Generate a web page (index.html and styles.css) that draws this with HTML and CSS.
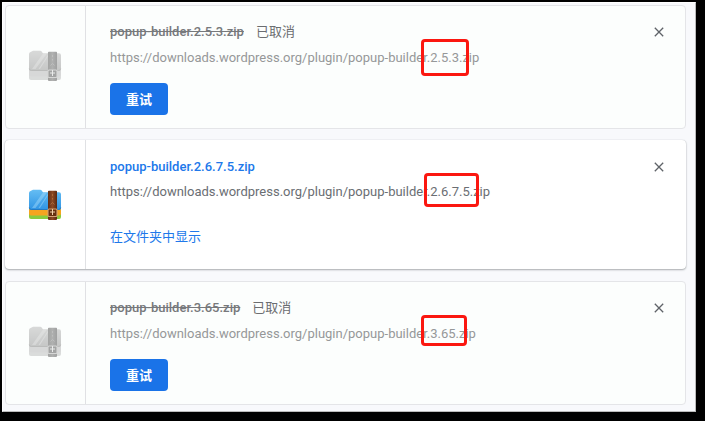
FILE: index.html
```
<!DOCTYPE html>
<html lang="zh-CN">
<head>
<meta charset="utf-8">
<title>下载内容</title>
<link rel="stylesheet" href="styles.css">
</head>
<body>
<svg class="defs" width="0" height="0" aria-hidden="true">
  <defs>
    <linearGradient id="front" x1="0" y1="0" x2="0" y2="1"><stop offset="0" stop-color="#65bdf3"/><stop offset="1" stop-color="#2f94e4"/></linearGradient>
    <linearGradient id="strap" x1="0" y1="0" x2="1" y2="0"><stop offset="0" stop-color="#602e16"/><stop offset=".5" stop-color="#8c4924"/><stop offset="1" stop-color="#592912"/></linearGradient>
    <symbol id="archive" viewBox="0 0 34 32">
      <path d="M1 21h32v7q0 2-2 2H3q-2 0-2-2z" fill="#8acb3e"/>
      <path d="M1 19h32v5.500q0 2-2 2H3q-2 0-2-2z" fill="#f5a51f"/>
      <path d="M1 4q0-1.500 1.500-2L5 .8h7q1.500 0 2 1.200l1 1.200h16q2 0 2 2V19q0 2-2 2H3q-2 0-2-2z" fill="url(#front)"/>
      <path d="M15 3.500h4L7.500 19H4zM20.500 4h1L12 19h-1.500z" fill="#a6dcfa" opacity=".45"/>
      <path d="M1.300 18.500q.3 2 2 2h27.400q1.700 0 2-2" fill="none" stroke="#2373b9" stroke-width=".8"/>
      <path d="M20 2.500q0-.8.8-.8h7.400q.8 0 .8.800v27.500q0 1-1 1h-7q-1 0-1-1z" fill="url(#strap)"/>
      <path d="M24.500 5v2m0 2v1.500m-2 5 2-2 2 2" fill="none" stroke="#b87945" stroke-width=".7"/>
      <rect x="20" y="20" width="9" height="7.500" rx="1" fill="#65300f" stroke="#d3a275" stroke-width="1.100"/>
      <path d="M24.500 20v6m-2.500-3h5" fill="none" stroke="#f2d2aa" stroke-width="1"/>
    </symbol>
    <symbol id="close" viewBox="0 0 10 10"><path d="m.8.8 8.400 8.400m0-8.400L.8 9.200" fill="none" stroke="#5f6368" stroke-width="1.300"/></symbol>
  </defs>
</svg>
<main class="downloads">
  <article class="card cancelled">
    <div class="thumb"><svg class="file-icon"><use href="#archive"/></svg></div>
    <div class="details">
      <div class="title"><s class="name">popup-builder.2.5.3.zip</s><span class="tag">已取消</span></div>
      <div class="url">https://downloads.wordpress.org/plugin/popup-builder.2.5.3.zip</div>
      <button class="retry">重试</button>
    </div>
    <svg class="close"><use href="#close"/></svg>
    <span class="mark mark-a"></span>
  </article>
  <article class="card complete">
    <div class="thumb"><svg class="file-icon"><use href="#archive"/></svg></div>
    <div class="details">
      <div class="title"><span class="name">popup-builder.2.6.7.5.zip</span></div>
      <div class="url">https://downloads.wordpress.org/plugin/popup-builder.2.6.7.5.zip</div>
      <div class="show">在文件夹中显示</div>
    </div>
    <svg class="close"><use href="#close"/></svg>
    <span class="mark mark-b"></span>
  </article>
  <article class="card cancelled">
    <div class="thumb"><svg class="file-icon"><use href="#archive"/></svg></div>
    <div class="details">
      <div class="title"><s class="name">popup-builder.3.65.zip</s><span class="tag">已取消</span></div>
      <div class="url">https://downloads.wordpress.org/plugin/popup-builder.3.65.zip</div>
      <button class="retry">重试</button>
    </div>
    <svg class="close"><use href="#close"/></svg>
    <span class="mark mark-c"></span>
  </article>
</main>
</body>
</html>
```
FILE: styles.css
```
* { box-sizing: border-box; }
body {
  margin: 0;
  height: 421px;
  padding: 2px 0 0 2px;
  background: #000;
  overflow: hidden;
  font: 13px/20px Roboto, "Noto Sans CJK SC", sans-serif;
}
.defs { position: absolute; }
.downloads {
  width: 694px;
  height: 410px;
  padding: 2px 10px 0 2px;
  background: #f8f9fc;
  border-top: 1px solid #fff;
  border-left: 1px solid #fff;
  border-right: 1px solid #bbb;
  border-bottom: 1px solid #bbb;
  display: flex;
  flex-direction: column;
  gap: 12px;
}
.card {
  position: relative;
  display: flex;
  flex: none;
  width: 681px;
  height: 124px;
  border-radius: 4px;
}
.cancelled { background: #fcfefd; border: 1px solid #e4e5e8; }
.complete {
  height: 129px;
  margin-top: -1px;
  background: #fff;
  box-shadow: 0 1px 2px rgba(60,64,67,.4), 0 0 1px rgba(60,64,67,.3);
}
.thumb {
  width: 81px;
  flex: none;
  display: flex;
  align-items: center;
  justify-content: center;
  padding-right: 1px;
  border-right: 1px solid #e0e1e4;
}
.cancelled .thumb { width: 80px; padding: 0 2px 2px 0; }
.file-icon { width: 34px; height: 32px; }
.cancelled .file-icon { filter: grayscale(1); opacity: .45; }
.details { padding: 17px 0 0 24px; }
.cancelled .details { padding-top: 16px; }
.title { display: flex; height: 20px; white-space: nowrap; }
.name { font-weight: 500; }
.cancelled .name { color: #77797c; }
.complete .name { color: #2078ea; }
.tag { margin-left: 12px; color: #6b6d70; }
.url { margin-top: 5px; height: 20px; white-space: nowrap; color: #6a6e73; }
.cancelled .url { margin-top: 6px; color: #969899; }
.retry {
  display: block;
  margin-top: 15px;
  width: 58px;
  height: 32px;
  padding: 0;
  border: 0;
  border-radius: 4px;
  background: #1a73e8;
  color: #fff;
  font: 700 13px/32px "Noto Sans CJK SC", sans-serif;
}
.show { margin-top: 25px; color: #2078ea; }
.close { position: absolute; right: 21px; top: 21px; width: 10px; height: 10px; }
.complete .close { right: 22px; top: 22px; }
.mark { position: absolute; border: 3px solid #fb1710; border-radius: 4px; }
.mark-a { left: 415px; top: 33px; width: 48px; height: 37px; }
.mark-b { left: 419px; top: 33px; width: 55px; height: 34px; }
.mark-c { left: 415px; top: 33px; width: 46px; height: 31px; }
```
